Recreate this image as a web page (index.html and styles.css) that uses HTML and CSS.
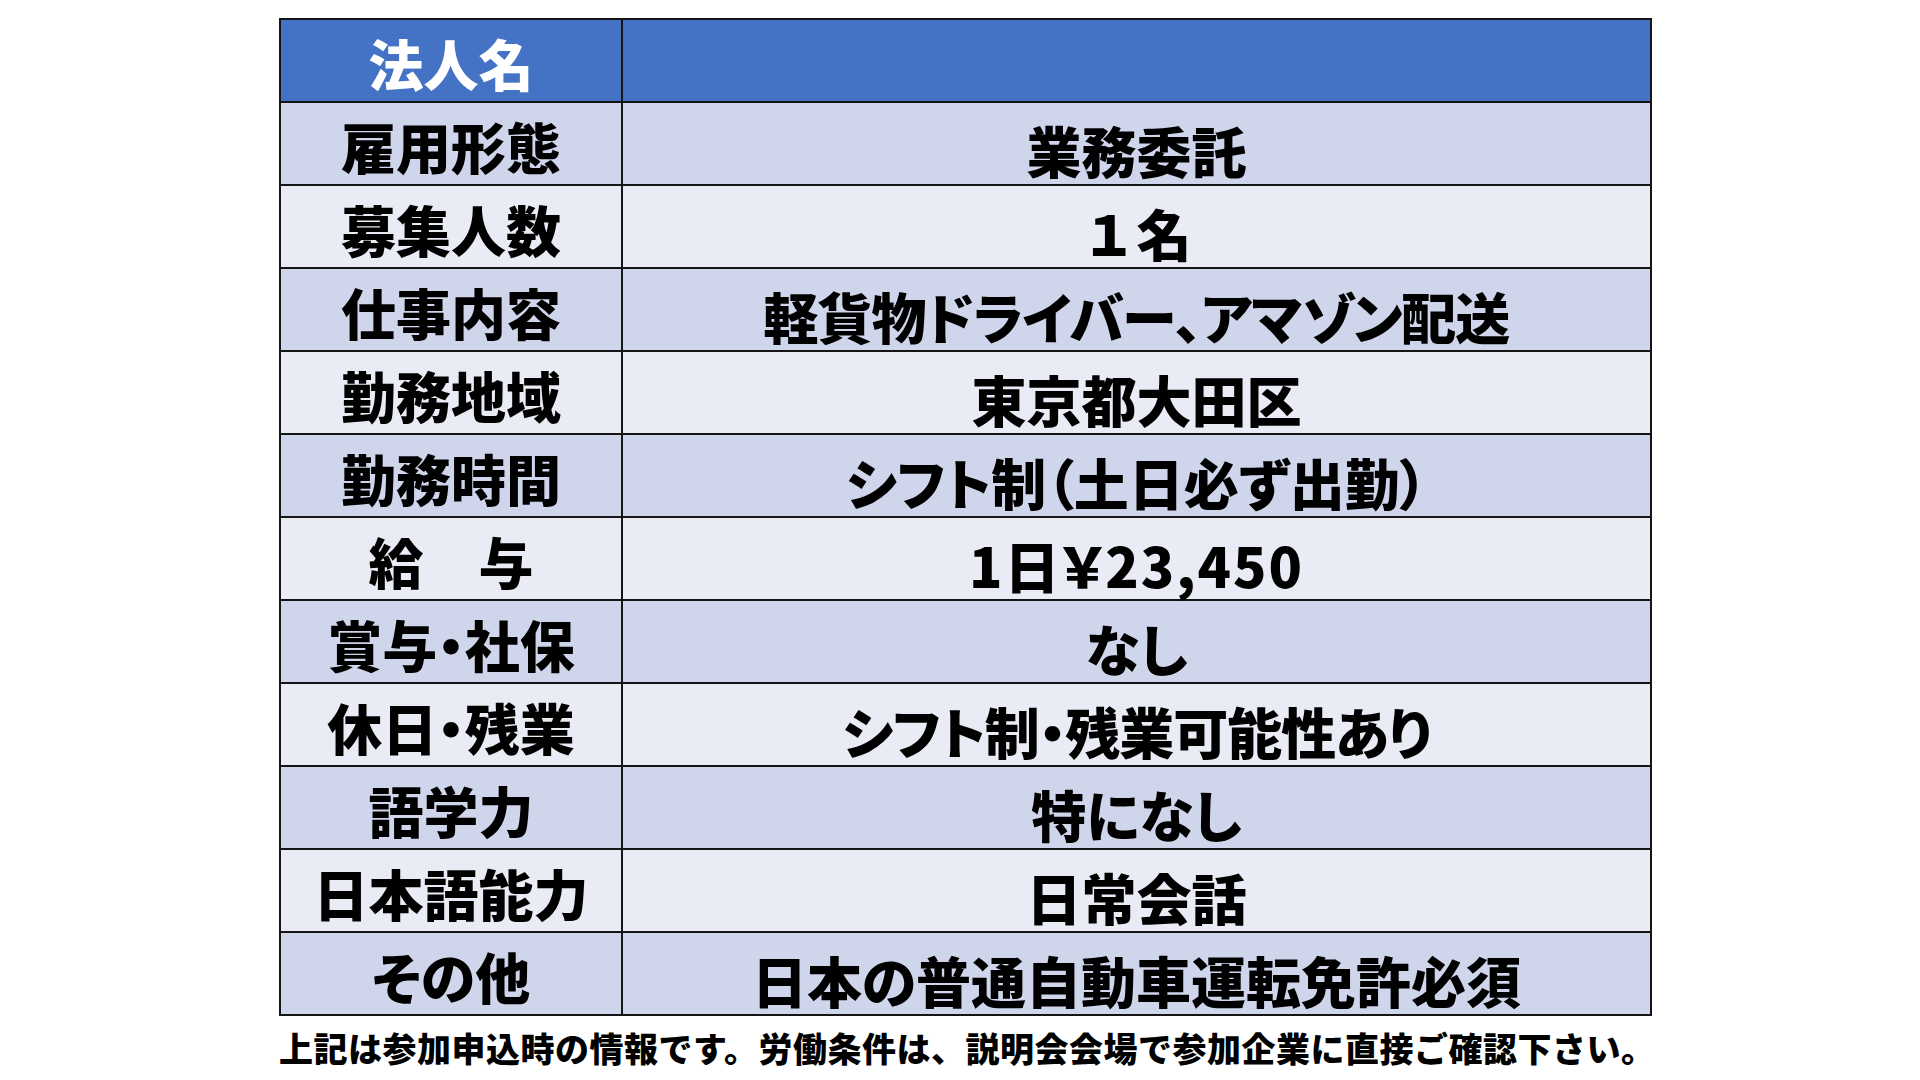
FILE: index.html
```html
<!DOCTYPE html>
<html lang="ja">
<head>
<meta charset="utf-8">
<title>求人情報</title>
<link rel="stylesheet" href="styles.css">
</head>
<body>
<main class="page">
  <div class="table">
    <div class="row head"><div class="k">法人名</div><div class="v"></div></div>
    <div class="row dark"><div class="k">雇用形態</div><div class="v">業務委託</div></div>
    <div class="row light"><div class="k">募集人数</div><div class="v plain">１名</div></div>
    <div class="row dark"><div class="k">仕事内容</div><div class="v tight">軽貨物ドライバー、アマゾン配送</div></div>
    <div class="row light"><div class="k">勤務地域</div><div class="v">東京都大田区</div></div>
    <div class="row dark"><div class="k">勤務時間</div><div class="v">シフト制（土日必ず出勤）</div></div>
    <div class="row light"><div class="k">給　与</div><div class="v wide">1日￥23,450</div></div>
    <div class="row dark"><div class="k">賞与・社保</div><div class="v">なし</div></div>
    <div class="row light"><div class="k">休日・残業</div><div class="v tight">シフト制・残業可能性あり</div></div>
    <div class="row dark"><div class="k">語学力</div><div class="v">特になし</div></div>
    <div class="row light"><div class="k">日本語能力</div><div class="v">日常会話</div></div>
    <div class="row dark"><div class="k">その他</div><div class="v">日本の普通自動車運転免許必須</div></div>
  </div>
  <p class="note">上記は参加申込時の情報です。労働条件は、説明会会場で参加企業に直接ご確認下さい。</p>
</main>
</body>
</html>
```

FILE: styles.css
```css
html, body {
  margin: 0;
  padding: 0;
  background: #ffffff;
}

body {
  font-family: "Noto Sans CJK JP", "Noto Sans", sans-serif;
  color: #000;
}

.page {
  width: 1373px;
  margin-left: 279px;
  padding-top: 18px;
}

.table {
  border: 2px solid #151515;
  border-bottom: none;
}

.row {
  display: grid;
  grid-template-columns: 342px 1fr;
  height: 83px;
  box-sizing: border-box;
  border-bottom: 2px solid #151515;
}

.row.head { background: #4472c4; }
.row.dark { background: #cfd5ea; }
.row.light { background: #e9ebf5; }

.k, .v {
  display: flex;
  align-items: center;
  justify-content: center;
  font-size: 55px;
  font-weight: 900;
  line-height: 1;
  white-space: nowrap;
  font-feature-settings: "palt";
}

.k {
  border-right: 2px solid #151515;
  padding-top: 4px;
}

.v {
  padding-top: 12px;
}

.v.plain {
  font-feature-settings: normal;
}

.v.tight {
  letter-spacing: -1px;
}

.v.wide {
  letter-spacing: 2px;
}

.head .k {
  color: #ffffff;
}

.note {
  margin: 7px 0 0 0;
  font-size: 34px;
  font-weight: 900;
  line-height: 1.45;
  letter-spacing: 0.5px;
  white-space: nowrap;
}
```
